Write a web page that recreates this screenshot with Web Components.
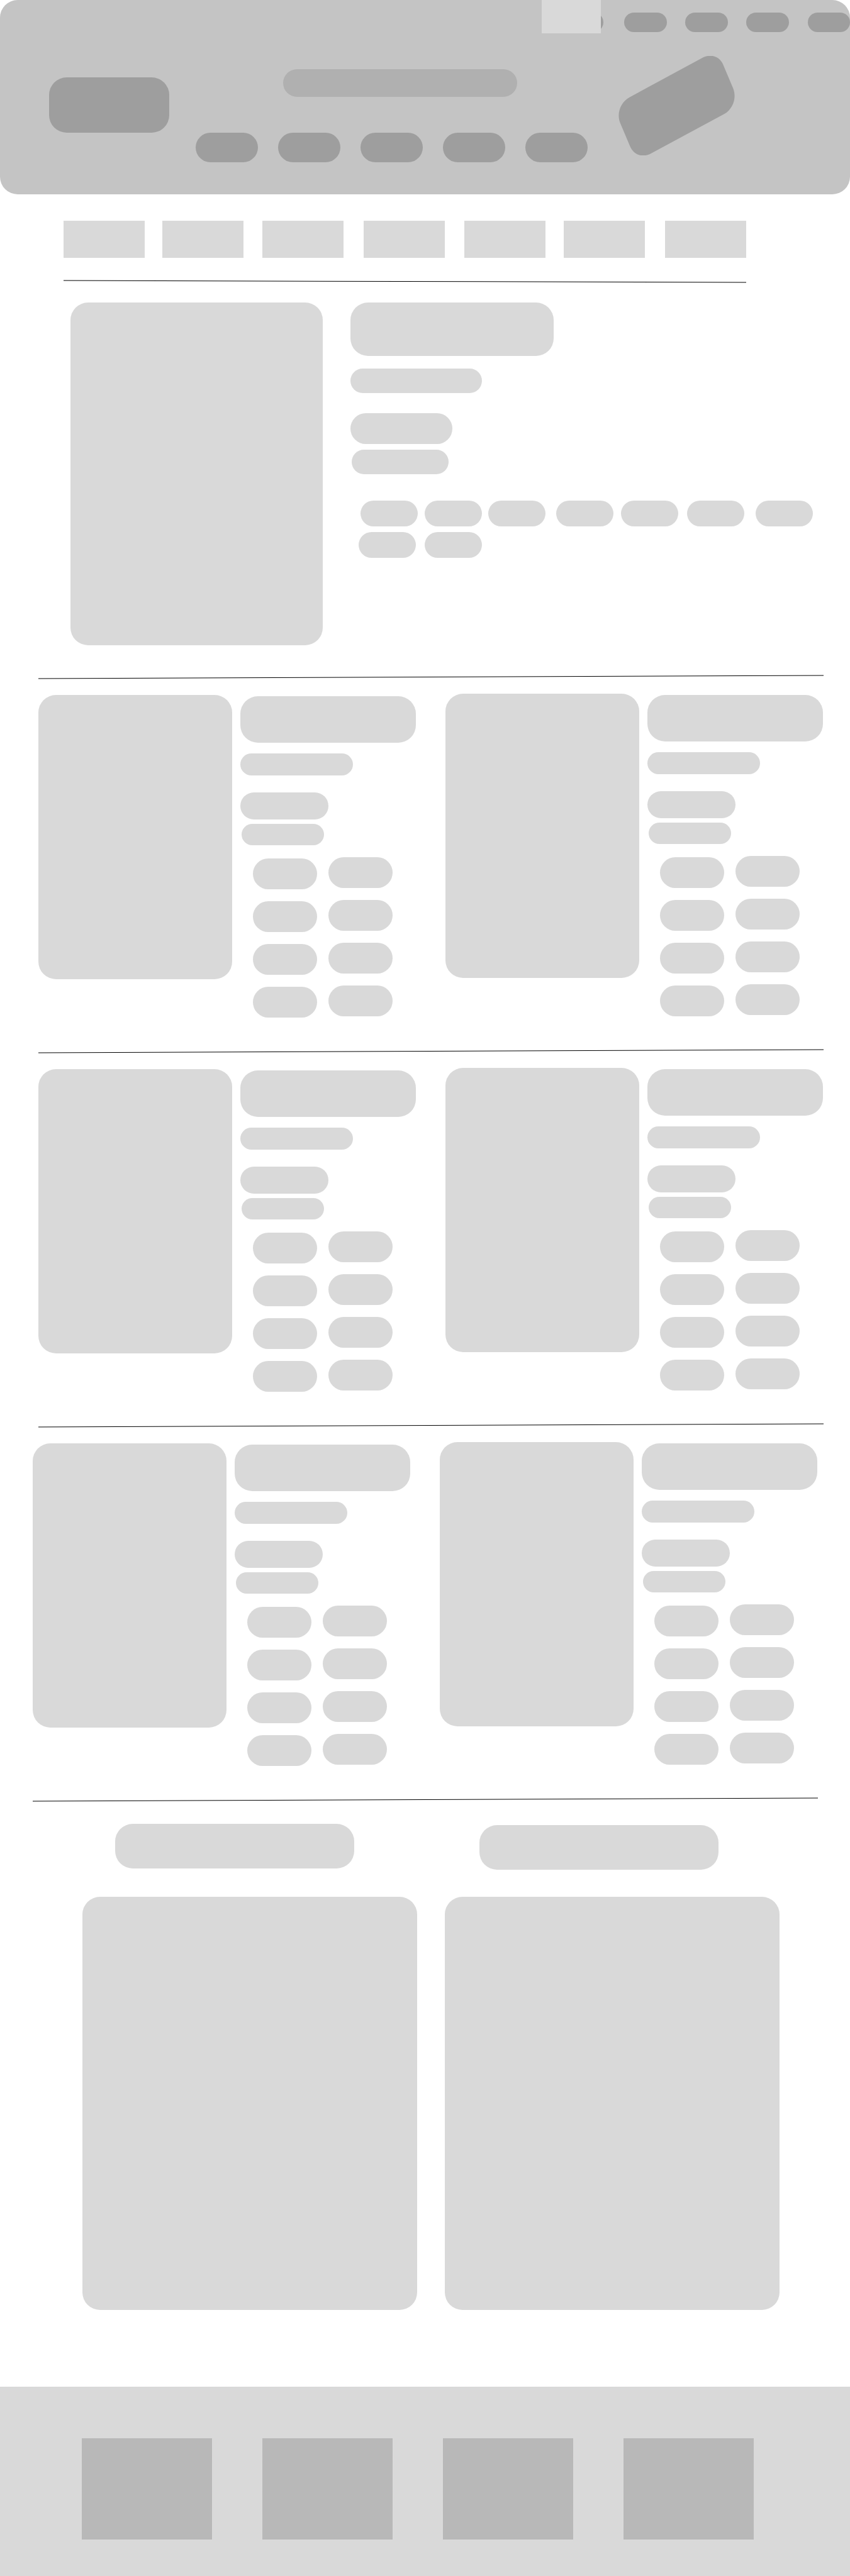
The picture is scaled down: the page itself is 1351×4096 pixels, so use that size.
<!DOCTYPE html>
<html lang="en">
<head>
<meta charset="utf-8">
<meta name="viewport" content="width=device-width, initial-scale=1">
<title>Store wireframe</title>
<style>
  body { margin: 0; background: #fff; font-family: "Liberation Sans", Arial, sans-serif; }
</style>
</head>
<body>
<store-page></store-page>

<template id="store-page">
  <style>
    :host { display: block; }
    .categories { margin-top: 42px; }
    .rule-top { margin-top: 35px; }
    feature-card { margin: 31px 0 47px; }
    .pair { margin: 24px 0 50px; align-items: start; }
    .pair > :first-child { margin-top: 2px; }
    .headings { margin-top: 36px; align-items: start; }
    .headings > :last-child { margin-top: 2px; }
    .panels { margin: 43px 0 122px; }
  </style>
  <store-header></store-header>
  <main>
    <track-row class="categories" tracks="101 129 28 129 30 129 32 129 31 129 29 129 32 129 165">
      <bone-box h="59" r="0"></bone-box><bone-box h="59" r="0"></bone-box><bone-box h="59" r="0"></bone-box><bone-box h="59" r="0"></bone-box><bone-box h="59" r="0"></bone-box><bone-box h="59" r="0"></bone-box><bone-box h="59" r="0"></bone-box>
    </track-row>
    <track-row class="rule-top" tracks="101 1085 165"><slant-rule from="1" to="4"></slant-rule></track-row>
    <feature-card></feature-card>
    <track-row tracks="61 1248 42"><slant-rule from="6" to="1"></slant-rule></track-row>
    <track-row class="pair" tracks="61 600 47 600 43"><product-card></product-card><product-card></product-card></track-row>
    <track-row tracks="61 1248 42"><slant-rule from="6" to="1"></slant-rule></track-row>
    <track-row class="pair" tracks="61 600 47 600 43"><product-card></product-card><product-card></product-card></track-row>
    <track-row tracks="61 1248 42"><slant-rule from="6" to="1"></slant-rule></track-row>
    <track-row class="pair" tracks="52 600 47 600 52"><product-card></product-card><product-card></product-card></track-row>
    <track-row tracks="52 1248 51"><slant-rule from="6" to="1"></slant-rule></track-row>
    <track-row class="headings" tracks="183 380 199 380 209"><bone-box h="71"></bone-box><bone-box h="71"></bone-box></track-row>
    <track-row class="panels" tracks="131 532 44 532 112"><bone-box h="657"></bone-box><bone-box h="657"></bone-box></track-row>
  </main>
  <store-footer></store-footer>
</template>

<template id="store-header">
  <style>
    :host { display: block; }
    header { position: relative; min-height: 309px; box-sizing: border-box; padding-top: 20px; background: #c4c4c4; border-radius: 28px; }
    bone-box { --bone: #9e9e9e; }
    .flag { position: absolute; top: 0; left: 63.7%; width: 7%; --bone: #d9d9d9; }
    .main { align-items: start; }
    .logo { margin-top: 72px; }
    .center { margin-top: 59px; display: grid; gap: 57px; }
    .search { --bone: #b0b0b0; }
    svg { display: block; width: 100%; height: 158px; margin-top: 38px; }
  </style>
  <header>
    <nav aria-label="Account">
      <track-row tracks="891 68 33 68 29 68 29 68 30 67">
        <bone-box h="31"></bone-box><bone-box h="31"></bone-box><bone-box h="31"></bone-box><bone-box h="31"></bone-box><bone-box h="31"></bone-box>
      </track-row>
    </nav>
    <bone-box class="flag" h="53" r="0"></bone-box>
    <track-row class="main" tracks="78 191 42 623 49 185 183">
      <bone-box class="logo" h="88"></bone-box>
      <div class="center">
        <track-row tracks="139 372 112"><bone-box class="search" h="44"></bone-box></track-row>
        <nav aria-label="Main">
          <track-row tracks="0 99 32 99 32 99 32 99 32 99">
            <bone-box h="47"></bone-box><bone-box h="47"></bone-box><bone-box h="47"></bone-box><bone-box h="47"></bone-box><bone-box h="47"></bone-box>
          </track-row>
        </nav>
      </div>
      <svg viewBox="24 46 591 506" aria-hidden="true">
        <path fill="#9e9e9e" d="M78 257L447 57C487 34 539 42 559 97L607 211C626 258 607 314 563 341L192 541C152 564 100 556 80 501L32 387C13 340 32 284 78 257Z"/>
      </svg>
    </track-row>
  </header>
</template>

<template id="feature-card">
  <style>
    :host { display: block; }
    .info { display: flex; flex-direction: column; }
    .title { width: 44%; }
    .byline { width: 28.4%; margin-top: 20px; }
    .price { width: 22%; margin-top: 32px; }
    .note { width: 21%; margin: 9px 0 42px 2px; }
    .second { margin-top: 9px; }
  </style>
  <article>
    <track-row tracks="112 401 44 735 59">
      <bone-box h="545"></bone-box>
      <div class="info">
        <bone-box class="title" h="85"></bone-box>
        <bone-box class="byline" h="39"></bone-box>
        <bone-box class="price" h="49"></bone-box>
        <bone-box class="note" h="39"></bone-box>
        <track-row tracks="16 91 11 91 10 91 17 91 12 91 14 91 18 91">
          <bone-box h="41"></bone-box><bone-box h="41"></bone-box><bone-box h="41"></bone-box><bone-box h="41"></bone-box><bone-box h="41"></bone-box><bone-box h="41"></bone-box><bone-box h="41"></bone-box>
        </track-row>
        <track-row class="second" tracks="13 91 14 91 526">
          <bone-box h="41"></bone-box><bone-box h="41"></bone-box>
        </track-row>
      </div>
    </track-row>
  </article>
</template>

<template id="product-card">
  <style>
    :host { display: block; }
    .info { display: flex; flex-direction: column; margin-top: 2px; }
    .byline { width: 64%; margin-top: 17px; }
    .price { width: 50%; margin-top: 27px; }
    .note { width: 47%; margin: 7px 0 19px 2px; }
    .chips { display: flex; flex-direction: column; gap: 19px; }
    .chips:first-child { margin-top: 2px; }
  </style>
  <article>
    <track-row tracks="308 13 279">
      <bone-box slot="lead" h="452"></bone-box>
      <div class="info">
        <bone-box h="74"></bone-box>
        <bone-box class="byline" h="35"></bone-box>
        <bone-box class="price" h="43"></bone-box>
        <bone-box class="note" h="34"></bone-box>
        <track-row tracks="20 102 18 102 37">
          <div class="chips"><bone-box h="49"></bone-box><bone-box h="49"></bone-box><bone-box h="49"></bone-box><bone-box h="49"></bone-box></div>
          <div class="chips"><bone-box h="49"></bone-box><bone-box h="49"></bone-box><bone-box h="49"></bone-box><bone-box h="49"></bone-box></div>
        </track-row>
      </div>
    </track-row>
  </article>
</template>

<template id="store-footer">
  <style>
    :host { display: block; }
    footer { background: #d9d9d9; padding: 82px 0 58px; --bone: #b8b8b8; }
  </style>
  <footer>
    <track-row tracks="130 207 80 207 80 207 80 207 153">
      <bone-box h="161" r="0"></bone-box><bone-box h="161" r="0"></bone-box><bone-box h="161" r="0"></bone-box><bone-box h="161" r="0"></bone-box>
    </track-row>
  </footer>
</template>

<script>
  // Rounded placeholder block: h = height, r = corner radius.
  customElements.define('bone-box', class extends HTMLElement {
    connectedCallback() {
      if (this.shadowRoot) return;
      const h = this.getAttribute('h');
      const r = this.getAttribute('r') ?? 28;
      this.attachShadow({ mode: 'open' }).innerHTML =
        `<style>:host{display:block}div{height:${h}px;border-radius:${r}px;background:var(--bone,#d9d9d9)}</style><div></div>`;
    }
  });

  // Proportional row: tracks alternate space, item, space, item.
  // A "lead" item starts flush with the row, with no space before it.
  customElements.define('track-row', class extends HTMLElement {
    connectedCallback() {
      if (this.shadowRoot) return;
      const tracks = this.getAttribute('tracks').split(' ');
      const lead = this.querySelector(':scope > [slot="lead"]');
      const first = lead ? 1 : 2;
      const rules = [...this.children].map((_, i) =>
        lead ? '' : `::slotted(:nth-child(${i + 1})){grid-column:${first + 2 * i}}`).join('');
      this.attachShadow({ mode: 'open' }).innerHTML =
        `<style>:host{display:grid;grid-template-columns:${tracks.map(t => `minmax(0,${t}fr)`).join(' ')}}
        ${rules}${lead ? '::slotted([slot="lead"]){grid-column:1}::slotted(:not([slot])){grid-column:3}' : ''}</style>
        ${lead ? '<slot name="lead"></slot>' : ''}<slot></slot>`;
    }
  });

  // Thin divider that runs at a slight slope.
  customElements.define('slant-rule', class extends HTMLElement {
    connectedCallback() {
      if (this.shadowRoot) return;
      const a = this.getAttribute('from'), b = this.getAttribute('to');
      const h = a > b ? 6 : 5;
      this.attachShadow({ mode: 'open' }).innerHTML =
        `<style>:host{display:block}svg{display:block;width:100%;height:${h}px;overflow:visible}</style>
        <svg viewBox="0 0 100 ${h}" preserveAspectRatio="none" aria-hidden="true"><line x1="0" y1="${a}" x2="100" y2="${b}" stroke="#000" stroke-width="1" vector-effect="non-scaling-stroke"/></svg>`;
    }
  });

  for (const name of ['store-header', 'feature-card', 'product-card', 'store-footer', 'store-page']) {
    customElements.define(name, class extends HTMLElement {
      connectedCallback() {
        if (this.shadowRoot) return;
        this.attachShadow({ mode: 'open' })
          .append(document.getElementById(name).content.cloneNode(true));
      }
    });
  }
</script>
</body>
</html>
